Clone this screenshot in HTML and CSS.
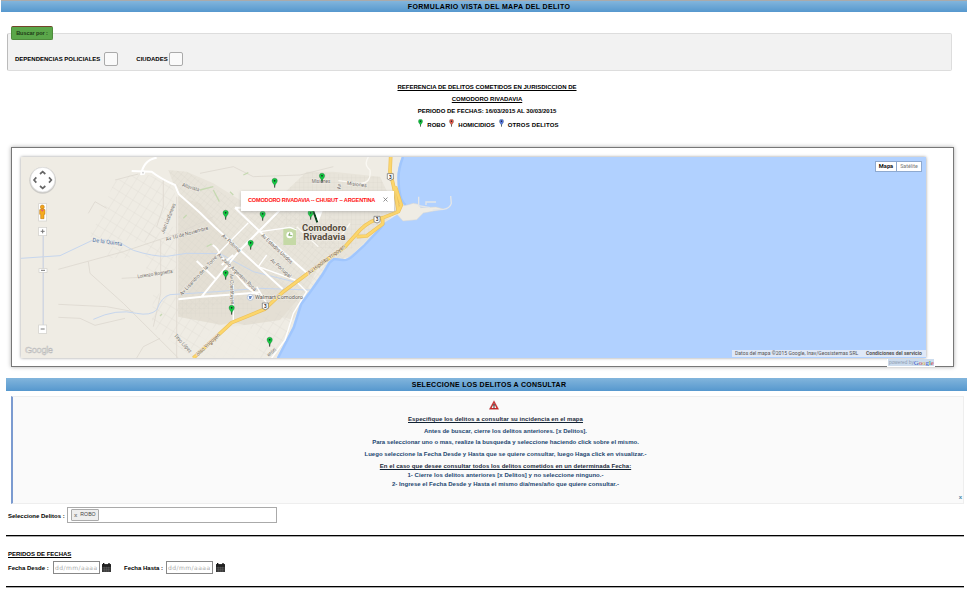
FILE: index.html
```html
<!DOCTYPE html>
<html lang="es">
<head>
<meta charset="utf-8">
<title>Formulario vista del mapa del delito</title>
<link rel="stylesheet" href="styles.css">
</head>
<body>
<header class="bar bar-top"><span class="t-title">FORMULARIO VISTA DEL MAPA DEL DELITO</span></header>

<section class="search">
  <div class="legend"><span>Buscar por :</span></div>
  <label class="check"><span class="t-dep">DEPENDENCIAS POLICIALES</span><i class="box"></i></label>
  <label class="check"><span class="t-ciu">CIUDADES</span><i class="box"></i></label>
</section>

<section class="reference">
  <p class="u">REFERENCIA DE DELITOS COMETIDOS EN JURISDICCION DE</p>
  <p class="u">COMODORO RIVADAVIA</p>
  <p>PERIODO DE FECHAS: 16/03/2015 AL 30/03/2015</p>
  <p class="keys">
    <svg class="key" viewBox="0 0 18 30"><use href="#pin" fill="#0fbf3c"/></svg><span>ROBO</span>
    <svg class="key" viewBox="0 0 18 30"><use href="#pin" fill="#e2574c"/></svg><span>HOMICIDIOS</span>
    <svg class="key" viewBox="0 0 18 30"><use href="#pin" fill="#5873e0"/></svg><span>OTROS DELITOS</span>
  </p>
</section>

<section class="map-frame">
  <div class="map">
    <svg class="map-art" viewBox="63 51 2715 603" preserveAspectRatio="none">
      <defs>
        <g id="pin"><path d="M9 29V17" stroke="#222" stroke-width="2.5"/><path d="M9 25C8 18 1 15 1 8.500A8 8 0 0 1 17 8.500C17 15 10 18 9 25Z" stroke="#17512a" stroke-opacity=".6" stroke-width="1.500"/><circle cx="9" cy="8.500" r="2.500" fill="#122"/></g>
        <pattern id="gridA" width="13" height="17" patternUnits="userSpaceOnUse" patternTransform="rotate(40)"><path d="M0 0H13M0 0V17" stroke="#d9d4ca" stroke-width="1.600" fill="none"/></pattern>
        <pattern id="gridB" width="13" height="14" patternUnits="userSpaceOnUse"><path d="M0 0H13M0 0V14" stroke="#d9d4ca" stroke-width="1.600" fill="none"/></pattern>
        <pattern id="gridC" width="24" height="30" patternUnits="userSpaceOnUse" patternTransform="rotate(32)"><path d="M0 0H24M0 0V30" stroke="#dcd8cf" stroke-width="1.600" fill="none"/></pattern>
        <g id="shield"><path d="M-9-9H9V7L0 11L-9 7Z" fill="#fff" stroke="#666" stroke-width="2"/><text y="6" font-size="14" font-weight="700" text-anchor="middle" fill="#333">3</text></g>
      </defs>
      <rect x="63" y="51" width="2715" height="603" fill="#efece4"/>
      <!-- urban areas -->
      <path d="M505 90L560 95L640 130L720 180L820 190L920 95L1000 95L1140 110L1190 215L1050 350L960 370L880 540L770 510L690 560L535 530V170Z" fill="#e8e4da"/>
      <path d="M535 170L600 190L660 265L720 330L900 470L840 540L700 560L535 530Z" fill="#e4dfd4"/>
      <path d="M505 90L560 95L720 190L880 200L1060 360L920 490L700 480L535 530V170Z" fill="url(#gridA)"/>
      <path d="M820 190L920 95L1140 110L1190 215L1050 330L900 320Z" fill="url(#gridB)"/>
      <path d="M535 470H720L770 505L690 530H535Z" fill="url(#gridB)"/>
      <path d="M345 120L420 95L510 130L530 170L460 310L265 290L300 230Z" fill="url(#gridC)"/>
      <path d="M460 455L535 475V530H620L705 560L640 654H580L455 560ZM700 560L880 500L870 590L800 654H620ZM330 320H390V355H320ZM432 260H530V400H440ZM910 240L1010 220L1040 300L940 320Z" fill="url(#gridC)"/>
      <path d="M600 590Q690 520 760 570Q800 610 760 654H600Z" fill="#efece4" opacity=".75"/>
      <g fill="none" stroke="#ddd9d0" stroke-width="2.500">
        <path d="M175 388L370 335L535 280L640 230M265 365L270 400L370 490L535 654M175 493L320 500L400 515M175 532L240 535L285 556L375 535M365 415L420 412L520 390M410 654L430 620L480 595M265 220L285 185L320 205M345 120L415 102M490 120V200L470 260M482 300V460L460 560M530 170V654M600 100L700 80L760 110L900 105L1000 80"/>
      </g>
      <g fill="none" stroke="#c6d6ee" stroke-width="3">
        <path d="M63 355L180 347L275 302Q340 290 400 331Q460 350 500 349L560 340L660 341L760 395L900 430M280 538Q350 505 410 520Q450 528 470 510Q485 470 510 464L650 455L780 445L930 450"/>
      </g>
      <path d="M850 265H888V315H850Z" fill="#c5d9a6"/>
      <circle cx="869" cy="285" r="10" fill="#fff"/><path d="M869 278V287H877M864 285H869" stroke="#6aa04a" stroke-width="2.500" fill="none"/>
      <path d="M620 320L635 312M640 150L658 185M550 235L560 225M600 150L640 140M480 528L486 522M730 105L745 98M690 155L700 165" stroke="#c6d9b2" stroke-width="4"/>
      <!-- sea, coast and harbour -->
      <path d="M1205 51Q1190 90 1192 120Q1193 180 1213 195L1238 200L1205 215L1198 220L1150 250L1128 275L1090 315L1055 345Q1040 360 1025 357L1000 353L985 365L965 400L930 450L900 490L878 560L830 654H2778V51Z" fill="#b1d1ff"/>
      <path d="M1209 51Q1194 90 1196 120Q1197 180 1217 195M1154 250L1132 275L1094 315L1059 348Q1042 363 1027 360L1002 357L989 368L969 402L934 452L904 492L882 562L834 654" fill="none" stroke="#a0c6fd" stroke-width="7"/>
      <path d="M1192 195L1215 197L1240 190L1256 193L1262 203L1308 201L1330 207L1298 214L1270 219L1250 239L1209 243L1190 222Z" fill="#efece4" stroke="#d9d7d0" stroke-width="1.500"/>
      <path d="M1256 170V197L1290 203M1278 195V186H1308M1298 210L1330 208Q1350 205 1354 190L1352 168" fill="none" stroke="#e4e6e8" stroke-width="4"/>
      <!-- secondary roads -->
      <g fill="none" stroke="#fff" stroke-width="6" stroke-linejoin="round">
        <path d="M423 105Q430 60 470 53M395 93L455 95Q480 115 525 135L536 162L600 218L645 262L720 330L848 447M705 203H765M705 203L780 275L920 398M840 210L720 330L605 470M535 478L605 470L780 457M650 420L590 363M638 315Q655 325 660 345L740 440L795 480M700 345L665 375"/>
        <path d="M745 248L650 345M800 345L775 380L885 420L920 455L880 520L855 600L815 654M780 275L870 262L890 270M700 435V545M800 490L770 440" stroke-width="4"/>
        <path d="M1105 51Q1090 75 1110 90Q1115 130 1080 130L1015 122M890 260L955 320M1050 250L1015 300" stroke-width="4" stroke="#faf8f3"/>
      </g>
      <circle cx="429" cy="98" r="7" fill="#fff"/><circle cx="429" cy="98" r="2.500" fill="#ccc"/>
      <!-- route 3 -->
      <g fill="none" stroke-linejoin="round">
        <path d="M580 654L695 548L795 507L850 455L920 403L1035 320L1080 270Q1110 240 1150 233L1195 215L1190 185Q1180 130 1170 95L1172 51M1148 235V252L1100 288L1070 290M1186 140L1204 195L1195 215" stroke="#ecc25e" stroke-width="11"/>
        <path d="M580 654L695 548L795 507L850 455L920 403L1035 320L1080 270Q1110 240 1150 233L1195 215L1190 185Q1180 130 1170 95L1172 51M1148 235V252L1100 288L1070 290M1186 140L1204 195L1195 215" stroke="#fcd66c" stroke-width="7"/>
      </g>
      <use href="#shield" x="1171" y="110"/><use href="#shield" x="1131" y="238"/><use href="#shield" x="796" y="498"/>
      <!-- labels -->
      <g class="halo" font-size="16" fill="#6d6a66">
        <text transform="translate(545 139) rotate(17)" textLength="54" lengthAdjust="spacingAndGlyphs">Altavista</text>
        <text transform="translate(492 281) rotate(-68)" textLength="95" lengthAdjust="spacingAndGlyphs">Juan Lucifanores</text>
        <text transform="translate(499 303) rotate(-15)" textLength="131" lengthAdjust="spacingAndGlyphs">Av 10 de Noviembre</text>
        <text transform="translate(413 415) rotate(-9)" textLength="106" lengthAdjust="spacingAndGlyphs">Lorenzo Rognetta</text>
        <text transform="translate(546 467) rotate(-47)" textLength="155" lengthAdjust="spacingAndGlyphs">Av Lisandro de la Torre</text>
        <text transform="translate(521 588) rotate(47)" textLength="70" lengthAdjust="spacingAndGlyphs">Tirso López</text>
        <text transform="translate(664 289) rotate(43)" textLength="72" lengthAdjust="spacingAndGlyphs">Av Polonia</text>
        <text transform="translate(782 288) rotate(43)" textLength="123" lengthAdjust="spacingAndGlyphs">Av Estados Unidos</text>
        <text transform="translate(810 362) rotate(42)" textLength="78" lengthAdjust="spacingAndGlyphs">Av Portugal</text>
        <text transform="translate(651 346) rotate(44)" textLength="156" lengthAdjust="spacingAndGlyphs">Av Julio Argentino Roca</text>
        <text transform="translate(689 402) rotate(88)" textLength="91" lengthAdjust="spacingAndGlyphs">Av Constituyen</text>
        <text transform="translate(1040 134) rotate(8)" textLength="60" lengthAdjust="spacingAndGlyphs">Misiones</text>
        <text x="935" y="130" textLength="56" lengthAdjust="spacingAndGlyphs">Misiones</text>
        <text transform="translate(1024 148) rotate(-90)" textLength="16" lengthAdjust="spacingAndGlyphs">Av</text>
        <text transform="translate(806 650) rotate(-40)" textLength="30" lengthAdjust="spacingAndGlyphs">erón</text>
        <text transform="translate(928 404) rotate(-37)" textLength="136" fill="#79582c" lengthAdjust="spacingAndGlyphs">Av Hipólito Yrigoyen</text>
        <text transform="translate(594 649) rotate(-43)" textLength="92" fill="#79582c" lengthAdjust="spacingAndGlyphs">ólito Yrigoyen</text>
        <text transform="translate(277 305) rotate(8)" textLength="90" font-size="17" fill="#4d6f9f" lengthAdjust="spacingAndGlyphs">De la Quinta</text>
        <text x="765" y="478" textLength="144" font-size="18" fill="#5b5752" lengthAdjust="spacingAndGlyphs">Walmart Comodoro</text>
      </g>
      <circle cx="751" cy="472" r="9" fill="#fff" stroke="#9fb4d4" stroke-width="2"/><path d="M746 468H756L753 477H748Z" fill="#6c8cc4"/>
      <g class="halo city" font-size="25"><text x="906" y="274" textLength="133" lengthAdjust="spacingAndGlyphs">Comodoro</text><text x="910" y="299" textLength="126" lengthAdjust="spacingAndGlyphs">Rivadavia</text></g>
      <!-- incident pins -->
      <g fill="#12c740">
        <use href="#pin" x="815" y="114"/><use href="#pin" x="957" y="99"/><use href="#pin" x="668" y="210"/><use href="#pin" x="779" y="213"/><use href="#pin" x="923" y="210"/><use href="#pin" x="743" y="300"/><use href="#pin" x="668" y="390"/><use href="#pin" x="686" y="495"/><use href="#pin" x="800" y="591"/>
      </g>
      <path d="M940 213L952 247" stroke="#06401a" stroke-width="6"/>
      <path d="M943 210H969L955 247Z" fill="#fff"/>
      <!-- navigation controls -->
      <circle cx="128" cy="121" r="40" fill="#aaa" opacity=".5"/><circle cx="128" cy="119" r="37" fill="#fff" stroke="#d8d8d8" stroke-width="2"/>
      <path d="M120 102L128 95L136 102M120 138L128 145L136 138M109 112L102 120L109 128M147 112L154 120L147 128" fill="none" stroke="#666" stroke-width="5"/>
      <path d="M130 287V556" stroke="#c3cbd9" stroke-width="4"/><path d="M130 287V556" stroke="#e5e9f1" stroke-width="1.500"/>
      <g fill="#fff" stroke="#d0cec9" stroke-width="2"><rect x="116" y="191" width="24" height="52"/><rect x="116" y="262" width="24" height="25"/><rect x="117" y="386" width="24" height="11"/><rect x="116" y="555" width="24" height="25"/></g>
      <path d="M122 274H134M128 268V280M123 391H135M122 567H134" stroke="#777" stroke-width="3"/>
      <circle cx="127" cy="201" r="6" fill="#f2a51c" stroke="#b87409" stroke-width="1.500"/><path d="M119 209Q127 204 135 209V223H132V236H122V223H119Z" fill="#f5aa20" stroke="#b87409" stroke-width="1.500"/><path d="M122 209L127 215L132 209Z" fill="#e2567c"/>
      <text x="75" y="640" class="logo" textLength="84">Google</text>
    </svg>
    <div class="info"><b>COMODORO RIVADAVIA -- CHUBUT -- ARGENTINA</b><svg viewBox="0 0 10 10"><path d="M1 1L9 9M9 1L1 9"/></svg></div>
    <div class="types"><b>Mapa</b><span>Satélite</span></div>
    <div class="credit"><span>Datos del mapa ©2015 Google, Inav/Geosistemas SRL</span><b>Condiciones del servicio</b></div>
  </div>
  <div class="powered"><span class="by">powered by</span><span class="brand"><i class="b">G</i><i class="r">o</i><i class="y">o</i><i class="b">g</i><i class="g">l</i><i class="r">e</i></span></div>
</section>

<section class="bar bar-sub"><span class="t-sub">SELECCIONE LOS DELITOS A CONSULTAR</span></section>

<section class="help">
  <svg class="warn" viewBox="0 0 30 28"><path d="M15 1L29 27H1Z" fill="#c92a2a" stroke="#a33"/><path d="M15 9L22 23H8Z" fill="#fff"/><path d="M15 11V19M15 21V24" stroke="#333" stroke-width="4"/></svg>
  <p class="h1 u dark">Especifique los delitos a consultar su incidencia en el mapa</p>
  <p class="h2">Antes de buscar, cierre los delitos anteriores. [x Delitos].</p>
  <p class="h3">Para seleccionar uno o mas, realize la busqueda y seleccione haciendo click sobre el mismo.</p>
  <p class="h4">Luego seleccione la Fecha Desde y Hasta que se quiere consultar, luego Haga click en visualizar.-</p>
  <p class="h5 u dark">En el caso que desee consultar todos los delitos cometidos en un determinada Fecha:</p>
  <p class="h6">1- Cierre los delitos anteriores [x Delitos] y no seleccione ninguno.-</p>
  <p class="h7">2- Ingrese el Fecha Desde y Hasta el mismo dia/mes/año que quiere consultar.-</p>
  <span class="close">x</span>
</section>

<section class="crimes"><span class="lbl">Seleccione Delitos :</span><div class="multi"><span class="tag"><i>x</i><span>ROBO</span></span></div></section>
<hr class="first">
<section class="dates">
  <h2><span class="u">PERIDOS DE FECHAS</span></h2>
  <div class="row">
    <span class="lbl from">Fecha Desde :</span><span class="date">dd/mm/aaaa</span>
    <svg class="cal" viewBox="0 0 27 27"><path d="M0 3H27V27H0Z" fill="#333"/><path d="M5 0V5M21 0V5" stroke="#111" stroke-width="4"/><path d="M0 9H27" stroke="#111" stroke-width="3"/><path d="M2 14H25M2 19H25M2 24H25M7 11V27M13 11V27M19 11V27" stroke="#777" stroke-width="1"/></svg>
    <span class="lbl to">Fecha Hasta :</span><span class="date">dd/mm/aaaa</span>
    <svg class="cal cal-to" viewBox="0 0 27 27"><path d="M0 3H27V27H0Z" fill="#333"/><path d="M5 0V5M21 0V5" stroke="#111" stroke-width="4"/><path d="M0 9H27" stroke="#111" stroke-width="3"/><path d="M2 14H25M2 19H25M2 24H25M7 11V27M13 11V27M19 11V27" stroke="#777" stroke-width="1"/></svg>
  </div>
</section>
<hr class="last">
</body>
</html>
```
FILE: styles.css
```css
* { box-sizing: border-box; }
body { margin: 0; width: 967px; height: 590px; overflow: hidden; background: #fff; color: #000; font: bold 6px/8px "Liberation Sans", Arial, sans-serif; white-space: nowrap; }
p, h2 { margin: 0; font-size: 6px; }
.u { text-decoration: underline; text-underline-offset: 1px; text-decoration-thickness: 1px; }

.bar { display: flex; justify-content: center; align-items: center; background: linear-gradient(#82b5dc, #5698ce); font-size: 7px; color: #000; }
.bar-top { height: 12px; margin-left: 1px; padding-left: 10px; border-top: 1px solid #aaa; }
.bar-sub { height: 13px; margin: 11px 0 0 6px; padding-left: 5px; }
.t-title { letter-spacing: .34px; }
.t-sub { letter-spacing: .27px; }

.search { display: flex; align-items: center; position: relative; width: 945px; height: 38px; margin: 21px 0 0 7px; padding: 14px 0 0 7px; border: 1px solid #ddd; border-left-color: #bbb; border-radius: 2px; background: #f2f2f2; gap: 18px; }
.search .check + .check { margin-left: 0; }
.search .check + .check .box { margin-left: -3px; }
.check { display: flex; align-items: center; gap: 4px; }
.t-ciu { margin-right: 0; }
.legend { position: absolute; left: 3px; top: -8px; width: 42px; height: 14px; border: 1px solid #4e8b3c; border-top-color: #73432a; border-radius: 2px; background: #5ba74a; color: #1f3d18; text-align: center; line-height: 13px; font-size: 5.6px; letter-spacing: -.1px; }
.box { width: 14px; height: 14px; border: 1px solid #aaa; border-radius: 2px; background: #fafafa; }

.reference { display: flex; flex-direction: column; align-items: center; margin-top: 12px; padding-left: 7px; height: 64px; }
.reference p { height: 12px; }
.reference .keys { display: flex; align-items: flex-start; height: 10px; padding-left: 3px; }
.keys span { margin: 2px 4px 0 4px; }
.keys span:last-child { margin-right: 0; letter-spacing: .16px; }
.key { width: 5px; height: 8px; }

.map-frame { position: relative; width: 943px; height: 220px; margin-left: 11px; padding: 9px; border: 1px solid #777; box-shadow: 0 0 4px #aaa; }
.map { position: relative; width: 905px; height: 201px; box-shadow: 0 0 3px #999; }
.map-art { display: block; width: 905px; height: 201px; font-family: Roboto, sans-serif; font-weight: 400; }
.halo { paint-order: stroke; stroke: #f4f1ea; stroke-width: 3px; }
.city { fill: #554b3c; font-weight: 700; }
.logo { font: 28px "Liberation Sans", sans-serif; fill: #f7f6f3; stroke: #bbb; stroke-width: 1.5px; }
.info { position: absolute; left: 220px; top: 34px; width: 153px; height: 20px; padding: 0 6px 0 7px; display: flex; align-items: center; justify-content: space-between; background: #fff; color: #f11; box-shadow: 0 1px 3px #9999; font-size: 5.6px; letter-spacing: -.21px; }
.info b { position: relative; top: -1px; }
.info svg { flex: none; width: 5px; height: 5px; margin-top: -4px; stroke: #777; stroke-width: 1.6; }
.types { position: absolute; right: 4px; top: 4px; display: flex; width: 47px; height: 11px; background: #fff; border: 1px solid #8ea9cf; font: 6px/9px Roboto, sans-serif; color: #777; text-align: center; }
.types b { width: 21px; color: #111; border-right: 1px solid #8ea9cf; font-size: 5.7px; }
.types span { flex: 1; font-size: 5.3px; }
.credit { position: absolute; right: 0; bottom: 1px; width: 194px; height: 7px; padding: 0 4px 0 3px; display: flex; justify-content: space-between; background: #dfe8f7; color: #555; font: 5.1px/7px Roboto, sans-serif; }
.powered { position: absolute; right: 18px; bottom: -1px; display: flex; justify-content: space-between; width: 48px; height: 8px; padding: 0 2px 0 1px; border: solid #fff; border-width: 0 1px 1px; background: #ccdcee; line-height: 7px; font-weight: normal; }
.by { font-size: 4.8px; color: #8d9bae; }
.brand { display: flex; font: 6.8px/7px "Liberation Serif", serif; }
.brand i { font-style: normal; }
.b { color: #3257c8; }
.r { color: #d0393b; }
.y { color: #d9a51e; }
.g { color: #2f9a44; }

.help { display: flex; flex-direction: column; align-items: center; position: relative; width: 953px; height: 108px; margin: 5px 0 0 11px; padding: 3px 0 0 35px; border: 1px solid #eee; border-left: 2px solid #7b9bd0; background: #fafafa; color: #1c4770; }
.dark { color: #1a2a3a; text-decoration-color: #123; }
.warn { width: 10px; height: 10px; margin: 0 23px 5px 0; }
.h1 { height: 12px; margin-right: 20px; letter-spacing: .065px; }
.h2 { height: 11px; letter-spacing: .015px; }
.h3 { height: 12px; letter-spacing: .01px; }
.h4 { height: 12px; letter-spacing: .03px; }
.h5 { height: 9px; letter-spacing: .06px; }
.h6 { height: 9px; letter-spacing: .055px; }
.h7 { height: 9px; letter-spacing: .03px; }
.close { position: absolute; right: 1px; bottom: 2px; font-size: 6px; color: #4c86a8; }

.crimes { display: flex; align-items: center; height: 16px; margin: 3px 0 0 8px; }
.crimes .lbl { width: 59px; padding-top: 1px; }
.multi { display: flex; width: 210px; height: 16px; padding: 1px 3px; border: 1px solid #aaa; }
.tag { display: flex; width: 28px; height: 12px; padding-left: 2px; align-items: center; gap: 3px; border: 1px solid #aaa; border-radius: 1px; background: #eee; color: #444; font-size: 5.2px; font-weight: normal; }
.tag span { margin-top: -2px; }
.tag i { font: bold 6px/8px "Liberation Sans", sans-serif; color: #888; }
hr { width: 958px; height: 2px; margin: 0 0 0 6px; border: 0; background: #aaa; border-top: 1px solid #000; }
.first { margin-top: 12px; }
.dates { height: 49px; padding: 13px 0 0 8px; }
.row { display: flex; align-items: center; margin-top: 3px; height: 13px; }
.from { width: 45px; }
.to { width: 42px; margin-left: 13px; }
.date { width: 47px; height: 13px; padding-left: 1px; border: 1px solid #888; color: #aaa; font: 6px/11px "DejaVu Sans", sans-serif; letter-spacing: .45px; }
.cal { width: 9px; height: 9px; margin-left: 2px; }
.cal-to { margin-left: 3px; }
```
